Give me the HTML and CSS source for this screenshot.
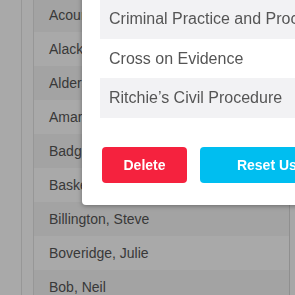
FILE: index.html
```html
<!DOCTYPE html>
<html lang="en">
<head>
    <meta charset="UTF-8">
    <meta name="viewport" content="width=device-width, initial-scale=1.0">
    <title>Users</title>
    <link rel="stylesheet" href="styles.css">
</head>
<body>
    <div class="page">
        <div class="rail"></div>
        <div class="rail rail-narrow"></div>
        <ul class="users">
            <li>Acourt, Tom</li>
            <li>Alack, Rosie</li>
            <li>Alderson, Kate</li>
            <li>Amarasekara, Ravi</li>
            <li>Badger, Sam</li>
            <li>Baskerville, Anne</li>
            <li>Billington, Steve</li>
            <li>Boveridge, Julie</li>
            <li>Bob, Neil</li>
        </ul>
    </div>

    <div class="overlay"></div>

    <div class="modal">
        <ul class="books">
            <li>Criminal Practice and Procedure</li>
            <li>Cross on Evidence</li>
            <li>Ritchie’s Civil Procedure</li>
        </ul>
        <div class="actions">
            <button class="btn btn-delete">Delete</button>
            <button class="btn btn-reset">Reset User</button>
        </div>
    </div>
</body>
</html>
```

FILE: styles.css
```css
body {
    margin: 0;
    padding: 0;
    font-family: "Liberation Sans", Arial, sans-serif;
    background-color: #fafafa;
    overflow: hidden;
    height: 295px;
}

.page {
    display: flex;
    height: 100%;
}

.rail {
    width: 21px;
    background-color: #fcfcfc;
    border-right: 1px solid #e2e2e2;
}

.rail-narrow {
    width: 11px;
}

.users {
    list-style: none;
    margin: -2px 0 0 0;
    padding: 0;
    width: 255px;
    border-right: 1px solid #d6d6d6;
}

.users li {
    height: 34px;
    line-height: 34px;
    padding-left: 15px;
    font-size: 14px;
    color: #555;
    background-color: #f4f4f4;
}

.users li:nth-child(even) {
    background-color: #fdfdfd;
}

.overlay {
    position: fixed;
    top: 0;
    left: 0;
    right: 0;
    bottom: 0;
    background-color: rgba(0, 0, 0, 0.33);
}

/* dialog sits over the list, cut off by the window */
.modal {
    position: absolute;
    left: 82px;
    top: -19px;
    width: 280px;
    padding: 18px 0 22px 18px;
    background-color: #fff;
    border-radius: 4px;
    box-shadow: 0 1px 5px rgba(0, 0, 0, 0.35);
}

.books {
    list-style: none;
    margin: 0;
    padding: 0;
}

.books li {
    height: 39.5px;
    line-height: 39px;
    padding-left: 9px;
    font-size: 16px;
    color: #555;
    white-space: nowrap;
}

.books li:nth-child(odd) {
    background-color: #f2f2f4;
}

.actions {
    display: flex;
    gap: 13px;
    margin-top: 29px;
    padding-left: 2px;
}

.btn {
    height: 36px;
    border: none;
    border-radius: 4px;
    color: #fff;
    font-family: "Liberation Sans", Arial, sans-serif;
    font-size: 14px;
    font-weight: bold;
    cursor: pointer;
}

.btn-delete {
    width: 85px;
    background-color: #f5223e;
}

.btn-reset {
    width: 147px;
    flex-shrink: 0;
    background-color: #00bef0;
}
```
